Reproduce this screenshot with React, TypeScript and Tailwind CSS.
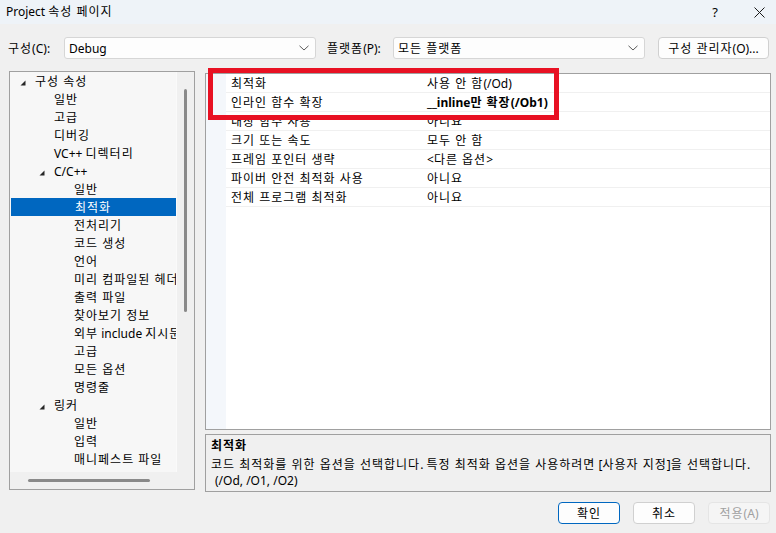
import React from "react";

type Node = { label: string; level: number; expand?: boolean; sel?: boolean };

const tree: Node[] = [
  { label: "구성 속성", level: 0, expand: true },
  { label: "일반", level: 1 },
  { label: "고급", level: 1 },
  { label: "디버깅", level: 1 },
  { label: "VC++ 디렉터리", level: 1 },
  { label: "C/C++", level: 1, expand: true },
  { label: "일반", level: 2 },
  { label: "최적화", level: 2, sel: true },
  { label: "전처리기", level: 2 },
  { label: "코드 생성", level: 2 },
  { label: "언어", level: 2 },
  { label: "미리 컴파일된 헤더", level: 2 },
  { label: "출력 파일", level: 2 },
  { label: "찾아보기 정보", level: 2 },
  { label: "외부 include 지시문", level: 2 },
  { label: "고급", level: 2 },
  { label: "모든 옵션", level: 2 },
  { label: "명령줄", level: 2 },
  { label: "링커", level: 1, expand: true },
  { label: "일반", level: 2 },
  { label: "입력", level: 2 },
  { label: "매니페스트 파일", level: 2 },
];

const props: { name: string; value: string; bold?: boolean }[] = [
  { name: "최적화", value: "사용 안 함(/Od)" },
  { name: "인라인 함수 확장", value: "__inline만 확장(/Ob1)", bold: true },
  { name: "내장 함수 사용", value: "아니요" },
  { name: "크기 또는 속도", value: "모두 안 함" },
  { name: "프레임 포인터 생략", value: "<다른 옵션>" },
  { name: "파이버 안전 최적화 사용", value: "아니요" },
  { name: "전체 프로그램 최적화", value: "아니요" },
];

const HANGUL_RUN = /([\uAC00-\uD7A3\u3131-\u318E]+(?: +[\uAC00-\uD7A3\u3131-\u318E]+)*)/;

function K({ t }: { t: string }) {
  const parts = t.split(HANGUL_RUN);
  return (
    <>
      {parts.map((p, i) =>
        i % 2 === 1 ? (
          <span key={i} className="tracking-[1px]">
            {p}
          </span>
        ) : (
          <span key={i}>{p}</span>
        )
      )}
    </>
  );
}

function Tri() {
  return (
    <span className="w-[15px] h-[18px] flex items-center shrink-0">
      <svg width="6" height="6" viewBox="0 0 6 6" className="mt-[4px]">
        <polygon points="5.5,0.5 5.5,5.5 0.5,5.5" fill="#262626" />
      </svg>
    </span>
  );
}

function Chevron() {
  return (
    <svg width="10" height="6" viewBox="0 0 10 6" className="shrink-0">
      <polyline points="0.5,0.8 5,5 9.5,0.8" fill="none" stroke="#5a5a5a" strokeWidth="1" />
    </svg>
  );
}

function padFor(n: Node) {
  if (n.level === 0) return "pl-[10px]";
  if (n.level === 1) return n.expand ? "pl-[29px]" : "pl-[44px]";
  return "pl-[64px]";
}

export default function App() {
  return (
    <div className="w-[776px] h-[533px] bg-[#f0f0f0] flex flex-col overflow-hidden text-[12px] text-[#1a1a1a] font-['Noto_Sans','Noto_Sans_CJK_KR',sans-serif] leading-[16px]">
      {/* Title bar */}
      <div className="h-[24px] bg-[#eef3f8] flex items-center pl-[6px] shrink-0">
        <span className="flex-1 text-[12px] text-black">
          <K t="Project 속성 페이지" />
        </span>
        <span className="text-[13px] text-black mr-[36px]">?</span>
        <svg width="11" height="11" viewBox="0 0 11 11" className="mr-[11px]">
          <path d="M0.5 0.5 L10.5 10.5 M10.5 0.5 L0.5 10.5" stroke="#1a1a1a" strokeWidth="1" />
        </svg>
      </div>

      {/* Toolbar */}
      <div className="mt-[13px] h-[22px] flex items-center shrink-0">
        <span className="ml-[8px] w-[56px] text-black pt-[1px]">
          <K t="구성" />(C):
        </span>
        <div className="w-[252px] h-[22px] bg-[#fdfdfd] border border-[#d6d6d6] rounded-[3px] flex items-center pl-[4px] pr-[6px]">
          <span className="flex-1 text-black pt-[1px]">Debug</span>
          <Chevron />
        </div>
        <span className="ml-[11px] w-[66px] text-black pt-[1px]">
          <K t="플랫폼" />(P):
        </span>
        <div className="w-[252px] h-[22px] bg-[#fdfdfd] border border-[#d6d6d6] rounded-[3px] flex items-center pl-[4px] pr-[6px]">
          <span className="flex-1 text-black pt-[1px]">
            <K t="모든 플랫폼" />
          </span>
          <Chevron />
        </div>
        <div className="ml-[13px] w-[111px] h-[22px] bg-[#fdfdfd] border border-[#d0d0d0] rounded-[4px] flex items-center justify-center text-black pt-[1px]">
          <K t="구성 관리자" />
          (O)...
        </div>
      </div>

      {/* Main */}
      <div className="mt-[12px] flex shrink-0">
        {/* Tree */}
        <div className="ml-[9px] w-[186px] h-[419px] border border-[#a0a0a0] flex flex-col bg-[#f0f0f0]">
          <div className="flex h-[400px]">
            <div className="w-[166px] bg-[#f7f7f7] overflow-hidden">
              {tree.map((n, i) => (
                <div
                  key={i}
                  className={
                    "h-[18px] flex items-center whitespace-nowrap " +
                    padFor(n) +
                    (n.sel ? " bg-[#0067c0] text-white ml-[1px]" : " text-black")
                  }
                >
                  {n.expand ? <Tri /> : null}
                  <span className="pt-[2px]">
                    <K t={n.label} />
                  </span>
                </div>
              ))}
            </div>
            <div className="flex-1 border-l border-[#fafafa] bg-[#f0f0f0]">
              <div className="ml-[7px] mt-[17px] w-[3px] h-[223px] bg-[#8a8a8a] rounded-[2px]" />
            </div>
          </div>
          <div className="h-[17px] flex items-center">
            <div className="ml-[18px] w-[122px] h-[3px] bg-[#8a8a8a] rounded-[2px]" />
          </div>
        </div>

        {/* Right */}
        <div className="ml-[10px] mt-[2px] w-[566px] flex flex-col relative">
          <div className="h-[357px] border border-[#a0a0a0] bg-white flex">
            <div className="w-[20px] bg-[#f4f7fb] shrink-0" />
            <div className="flex-1">
              {props.map((p, i) => (
                <div key={i} className="h-[19px] flex border-b border-[#f0f0f0]">
                  <div className="w-[197px] pl-[5px] pt-[2px] flex items-center text-black whitespace-nowrap">
                    <K t={p.name} />
                  </div>
                  <div
                    className={
                      "flex-1 pl-[4px] pt-[2px] flex items-center text-black whitespace-nowrap" +
                      (p.bold ? " font-bold" : "")
                    }
                  >
                    <K t={p.value} />
                  </div>
                </div>
              ))}
            </div>
          </div>
          <div className="mt-[4px] h-[58px] border border-[#a0a0a0] bg-[#f0f0f0] pl-[5px] pt-[3px] text-black">
            <div className="font-bold mb-[3px]">
              <K t="최적화" />
            </div>
            <div className="whitespace-nowrap">
              <K t="코드 최적화를 위한 옵션을 선택합니다. 특정 최적화 옵션을 사용하려면 [사용자 지정]을 선택합니다." />
            </div>
            <div className="pl-[4px]">(/Od, /O1, /O2)</div>
          </div>
          {/* Red highlight */}
          <div className="absolute left-[3px] top-[-5px] w-[351px] h-[52px] border-[5px] border-[#e81123]" />
        </div>
      </div>

      {/* Buttons */}
      <div className="mt-[10px] flex justify-end pr-[6px] gap-[13px] shrink-0">
        <div className="w-[62px] h-[22px] bg-[#fdfdfd] border border-[#0067c0] rounded-[4px] flex items-center justify-center text-black pt-[1px]">
          <K t="확인" />
        </div>
        <div className="w-[62px] h-[22px] bg-[#fdfdfd] border border-[#d0d0d0] rounded-[4px] flex items-center justify-center text-black pt-[1px]">
          <K t="취소" />
        </div>
        <div className="w-[62px] h-[22px] bg-[#f5f5f5] border border-[#e5e5e5] rounded-[4px] flex items-center justify-center text-[#a0a0a0] pt-[1px]">
          <K t="적용" />
          (A)
        </div>
      </div>
    </div>
  );
}
